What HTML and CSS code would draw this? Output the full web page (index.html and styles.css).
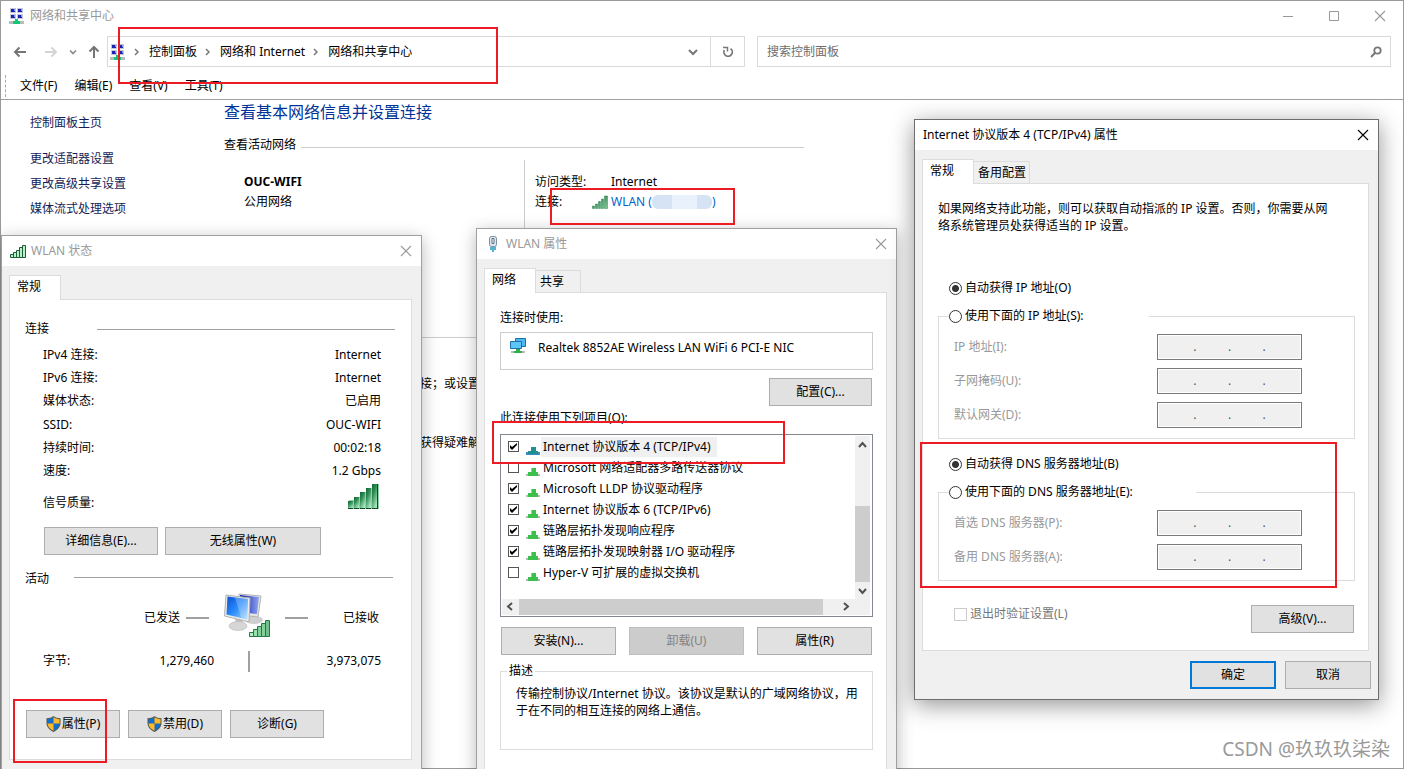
FILE: index.html
```html
<!DOCTYPE html>
<html lang="zh-CN">
<head>
<meta charset="utf-8">
<title>网络和共享中心</title>
<link rel="stylesheet" href="styles.css">
</head>
<body>
<svg class="defs" width="0" height="0" aria-hidden="true">
  <defs>
    <linearGradient id="gBar" x1="0" y1="0" x2="1" y2="1"><stop offset="0" stop-color="#14652f"/><stop offset="1" stop-color="#7fcb9a"/></linearGradient>
    <linearGradient id="gBarV" x1="0" y1="0" x2=".6" y2="1"><stop offset="0" stop-color="#0f6a36"/><stop offset=".4" stop-color="#2c8a52"/><stop offset="1" stop-color="#a6e6bd"/></linearGradient>
    <linearGradient id="gScreen" x1="0" y1="0" x2="1" y2="1"><stop offset="0" stop-color="#0a4fd0"/><stop offset=".5" stop-color="#2b8cff"/><stop offset="1" stop-color="#a9dcff"/></linearGradient>
    <linearGradient id="gScreen2" x1="0" y1="0" x2="1" y2="0"><stop offset="0" stop-color="#0a1aa8"/><stop offset="1" stop-color="#8fa4f2"/></linearGradient>
    <symbol id="netcenter" viewBox="0 0 16 16">
      <path fill="#c4c8d4" d="M1 0h6v5H1zM8 0h6v5H8zM1 6h6v5H1zM8 6h6v5H8z"/>
      <path fill="#1b22b4" d="M2 1h4v3H2zM9 1h4v3H9zM2 7h4v3H2zM9 7h4v3H9z"/>
      <path fill="#7e9bf0" d="M5 1h1v2H5zM12 1h1v2h-1zM5 7h1v2H5zM12 7h1v2h-1z"/>
      <path fill="#b9bdb9" d="M0 13h15v3H0z"/>
      <path fill="#12c878" d="M6 11h3v2h2v3H4v-3h2z"/>
    </symbol>
    <symbol id="close" viewBox="0 0 12 12"><path d="M1 1l10 10M11 1L1 11" fill="none" stroke="currentColor" stroke-width="1.1"/></symbol>
    <symbol id="plug" viewBox="0 0 14 8">
      <path fill="#b7b7b7" d="M0 6h14v2H0z"/><path fill="#3cc04c" d="M5 0h5v4h2v4H2V4h3z"/><path fill="#7fe08a" d="M5 0h1v4H5z"/>
    </symbol>
    <symbol id="plugblue" viewBox="0 0 14 8">
      <path fill="#3b8fc4" d="M0 5h14v3H0z"/><path fill="#1f8f8f" d="M5 0h5v4h2v3H2V4h3z"/>
    </symbol>
    <symbol id="bars" viewBox="0 0 16 13">
      <path fill="#b8f2c8" stroke="#1c5c36" d="M.5 9.500h3v3h-3zM3.500 7.500h3v5h-3zM6.500 5.500h3v7h-3zM9.500 2.500h3v10h-3zM12.500 .5h3v12h-3z"/>
    </symbol>
    <symbol id="barsdark" viewBox="0 0 16 14">
      <path fill="url(#gBar)" stroke="#2f8552" stroke-width=".5" d="M.5 11h2v2.500h-2zM3.500 9h2v4.500h-2zM6.500 6.500h2v7h-2zM9.500 4h2v9.500h-2zM12.500 1h3v12.500h-3z"/>
    </symbol>
    <symbol id="shield" viewBox="0 0 16 17">
      <path fill="#5a5a52" d="M8 0c2 1.600 4.500 2.300 7.500 2.300V7c0 5-3 8-7.500 10C3.500 15 .5 12 .5 7V2.300C3.500 2.300 6 1.600 8 0z"/>
      <path fill="#0f6fd0" d="M8 1.300V8H1.600V3.300C4 3.200 6.200 2.500 8 1.300zM8 8h6.300c-.4 4-2.800 6.200-6.300 7.800z"/>
      <path fill="#fdb92c" d="M8 1.300c1.800 1.200 4 1.900 6.400 2V8H8zM8 8v7.800C4.500 14.200 2.100 12 1.600 8z"/>
    </symbol>
  </defs>
</svg>

<main class="desktop">
  <section class="explorer">
    <header class="explorer-title">
      <svg class="i16"><use href="#netcenter"/></svg>
      <h1>网络和共享中心</h1>
      <div class="caption-buttons">
        <button type="button" aria-label="最小化"><svg width="12" height="12"><path d="M1 6.500h10" stroke="#999"/></svg></button>
        <button type="button" aria-label="最大化"><svg width="12" height="12"><path d="M1.500 1.500h9v9h-9z" fill="none" stroke="#999"/></svg></button>
        <button type="button" aria-label="关闭"><svg width="12" height="12"><use href="#close"/></svg></button>
      </div>
    </header>
    <nav class="toolbar">
      <div class="history">
        <button type="button" aria-label="后退"><svg width="14" height="12"><path d="M13 6H2M6.500 1.500L2 6l4.500 4.500" fill="none" stroke="#757575" stroke-width="2"/></svg></button>
        <button type="button" class="forward" aria-label="前进"><svg width="14" height="12"><path d="M1 6h11M7.500 1.500L12 6l-4.500 4.500" fill="none" stroke="#d4d4d4" stroke-width="2"/></svg></button>
        <button type="button" class="narrow" aria-label="最近"><svg width="8" height="6"><path d="M1 1.500l3 3 3-3" fill="none" stroke="#8a8a8a" stroke-width="1.700"/></svg></button>
        <button type="button" class="up" aria-label="向上"><svg width="12" height="14"><path d="M6 13V2M1.500 6.500L6 2l4.500 4.500" fill="none" stroke="#757575" stroke-width="2"/></svg></button>
      </div>
      <div class="address">
        <svg class="i16"><use href="#netcenter"/></svg>
        <ol class="crumbs">
          <li><svg width="5" height="8"><path d="M1 1l3 3-3 3" fill="none" stroke="#777" stroke-width="1.500"/></svg><a href="#">控制面板</a></li>
          <li><svg width="5" height="8"><path d="M1 1l3 3-3 3" fill="none" stroke="#777" stroke-width="1.500"/></svg><a href="#">网络和 Internet</a></li>
          <li><svg width="5" height="8"><path d="M1 1l3 3-3 3" fill="none" stroke="#777" stroke-width="1.500"/></svg><a href="#">网络和共享中心</a></li>
        </ol>
        <button type="button" class="drop" aria-label="展开"><svg width="10" height="8"><path d="M1 2l4 4 4-4" fill="none" stroke="#777" stroke-width="2"/></svg></button>
        <button type="button" class="refresh" aria-label="刷新"><svg width="12" height="12"><path d="M8.500 2.600A4.200 4.200 0 1 1 2.300 4.200" fill="none" stroke="#777" stroke-width="1.700"/><path d="M1 1.500h4.500v4" fill="none" stroke="#777" stroke-width="1.500"/></svg></button>
      </div>
      <form class="search">
        <input type="text" placeholder="搜索控制面板" aria-label="搜索控制面板">
        <button type="button" aria-label="搜索"><svg width="12" height="12"><circle cx="7.500" cy="4.500" r="3.200" fill="none" stroke="#777" stroke-width="1.800"/><path d="M5.200 6.800L1 11" stroke="#777" stroke-width="2"/></svg></button>
      </form>
    </nav>
    <div class="menubar">
      <button type="button">文件(F)</button><button type="button">编辑(E)</button><button type="button">查看(V)</button><button type="button">工具(T)</button>
    </div>
    <div class="content">
      <aside class="sidebar">
        <a href="#" class="home">控制面板主页</a>
        <a href="#">更改适配器设置</a>
        <a href="#">更改高级共享设置</a>
        <a href="#">媒体流式处理选项</a>
      </aside>
      <div class="overview">
        <h2>查看基本网络信息并设置连接</h2>
        <h3 class="ruled">查看活动网络</h3>
        <div class="network">
          <div class="network-name"><strong>OUC-WIFI</strong><span>公用网络</span></div>
          <dl class="network-info">
            <dt>访问类型:</dt><dd>Internet</dd>
            <dt>连接:</dt><dd class="with-icon"><svg width="16" height="14"><use href="#barsdark"/></svg><a href="#">WLAN (<span class="mask"></span>)</a></dd>
          </dl>
        </div>
        <h3 class="ruled change">更改网络设置</h3>
        <p class="task">连接；或设置</p>
        <p class="task second">者获得疑难解</p>
      </div>
    </div>
  </section>

  <section class="dialog status">
    <header class="dialog-title"><svg width="16" height="13"><use href="#bars"/></svg><h2>WLAN 状态</h2><button type="button" aria-label="关闭"><svg width="12" height="12"><use href="#close"/></svg></button></header>
    <div class="dialog-body">
      <div class="tabs"><button type="button" class="tab active">常规</button></div>
      <div class="panel">
        <div class="section-head"><h3>连接</h3><hr></div>
        <dl class="facts">
          <dt>IPv4 连接:</dt><dd>Internet</dd>
          <dt>IPv6 连接:</dt><dd>Internet</dd>
          <dt>媒体状态:</dt><dd>已启用</dd>
          <dt>SSID:</dt><dd>OUC-WIFI</dd>
          <dt>持续时间:</dt><dd>00:02:18</dd>
          <dt>速度:</dt><dd>1.2 Gbps</dd>
        </dl>
        <div class="quality"><span>信号质量:</span>
          <svg width="31" height="27"><path fill="#8fd0a6" d="M1 17h5v9H1zM7 14h5v12H7zM13 9h5v17h-5zM19 5h5v21h-5zM25 1h6v25h-6z"/><path fill="url(#gBarV)" d="M0 18h5v8H0z"/><path fill="url(#gBarV)" d="M6 14h5v12H6z"/><path fill="url(#gBarV)" d="M12 9h5v17h-5z"/><path fill="url(#gBarV)" d="M18 5h5v21h-5z"/><path fill="url(#gBarV)" d="M24 1h5v25h-5z"/><path stroke="#0c4a24" d="M0 25.500h5M6 25.500h5M12 25.500h5M18 25.500h5M24 25.500h6M29.500 1v25"/></svg>
        </div>
        <div class="row detail-buttons"><button type="button" class="btn w114">详细信息(E)...</button><button type="button" class="btn w156">无线属性(W)</button></div>
        <div class="section-head activity"><h3>活动</h3><hr></div>
        <div class="traffic">
          <span>已发送</span><i class="dash"></i>
          <svg width="46" height="44" viewBox="0 0 46 44">
            <ellipse cx="30" cy="27" rx="9" ry="4" fill="#cfcfcf"/>
            <path fill="#e4e4e2" stroke="#b4b4b4" d="M15 1l22 2-3 21-19-2z"/><path fill="url(#gScreen2)" d="M16 2l19 2-2 17-17-2z"/>
            <path fill="#c2c2c2" d="M11 25l8 2-1 6h-6z"/><ellipse cx="14" cy="33" rx="9" ry="4.500" fill="#d6d6d6" stroke="#b8b8b8" stroke-width=".6"/>
            <path fill="#ecece8" stroke="#b0b0b0" d="M2 2l24 3-1 24L.5 23z"/><path fill="url(#gScreen)" d="M3.500 3.500L24 6l-.8 20.500L2.500 21.500z"/><path fill="#fff" opacity=".25" d="M11 4.500L24 6l-.8 20.500-6-1.500z"/>
            <path fill="#b9ecc9" stroke="#217a42" d="M25.500 39.500h4v4h-4z"/><path fill="#9adfb0" stroke="#217a42" d="M29.500 36.500h4v7h-4z"/><path fill="#82cf9c" stroke="#217a42" d="M33.500 33.500h4v10h-4z"/><path fill="#82cf9c" stroke="#217a42" d="M37.500 30.500h4v13h-4z"/><path fill="#6fc08c" stroke="#217a42" d="M41.500 27.500h4v16h-4z"/>
          </svg>
          <i class="dash"></i><span class="received">已接收</span>
        </div>
        <div class="bytes"><span>字节:</span><span class="num">1,279,460</span><i class="split"></i><span class="num">3,973,075</span></div>
        <div class="row action-buttons">
          <button type="button" class="btn w94"><svg width="15" height="16"><use href="#shield"/></svg>属性(P)</button>
          <button type="button" class="btn w94"><svg width="15" height="16"><use href="#shield"/></svg>禁用(D)</button>
          <button type="button" class="btn w94">诊断(G)</button>
        </div>
      </div>
    </div>
  </section>

  <section class="dialog props">
    <header class="dialog-title"><svg width="16" height="16"><rect x="4.500" y=".5" width="7" height="10" rx="2" fill="#dbe8f2" stroke="#7b8d9e"/><path d="M7 2.500h2v5H7z" fill="#fff" stroke="#5d6f80"/><path d="M6 11v3M8 11v5M10 11v3" stroke="#2aa0c8" stroke-width="1.600"/></svg><h2>WLAN 属性</h2><button type="button" aria-label="关闭"><svg width="12" height="12"><use href="#close"/></svg></button></header>
    <div class="dialog-body">
      <div class="tabs"><button type="button" class="tab active">网络</button><button type="button" class="tab">共享</button></div>
      <div class="panel">
        <p class="caption">连接时使用:</p>
        <div class="adapter"><svg width="17" height="17"><path fill="#4db8ee" stroke="#1d6fa8" d="M5.500 1.500h10v8h-10z"/><path fill="#5cc6fa" stroke="#1d6fa8" d="M.5 4.500h11v7H.500z"/><path fill="#b9b9b9" d="M1 14h14v2H1z"/><path fill="#2fae4a" d="M6 12h4v2h2v2H4v-2h2z"/></svg>Realtek 8852AE Wireless LAN WiFi 6 PCI-E NIC</div>
        <div class="row end"><button type="button" class="btn w103">配置(C)...</button></div>
        <p class="caption items-caption">此连接使用下列项目(O):</p>
        <div class="listbox">
          <ul>
            <li><input type="checkbox" id="c1" checked><svg width="14" height="8"><use href="#plugblue"/></svg><label for="c1" class="selected">Internet 协议版本 4 (TCP/IPv4)</label></li>
            <li><input type="checkbox" id="c2"><svg width="14" height="8"><use href="#plug"/></svg><label for="c2">Microsoft 网络适配器多路传送器协议</label></li>
            <li><input type="checkbox" id="c3" checked><svg width="14" height="8"><use href="#plug"/></svg><label for="c3">Microsoft LLDP 协议驱动程序</label></li>
            <li><input type="checkbox" id="c4" checked><svg width="14" height="8"><use href="#plug"/></svg><label for="c4">Internet 协议版本 6 (TCP/IPv6)</label></li>
            <li><input type="checkbox" id="c5" checked><svg width="14" height="8"><use href="#plug"/></svg><label for="c5">链路层拓扑发现响应程序</label></li>
            <li><input type="checkbox" id="c6" checked><svg width="14" height="8"><use href="#plug"/></svg><label for="c6">链路层拓扑发现映射器 I/O 驱动程序</label></li>
            <li><input type="checkbox" id="c7"><svg width="14" height="8"><use href="#plug"/></svg><label for="c7">Hyper-V 可扩展的虚拟交换机</label></li>
          </ul>
          <div class="vbar"><svg width="15" height="17"><path d="M4 11l3.500-4 3.500 4" fill="none" stroke="#505050" stroke-width="2"/></svg><i></i><svg width="15" height="17"><path d="M4 7l3.500 4L11 7" fill="none" stroke="#505050" stroke-width="2"/></svg></div>
          <div class="hbar"><svg width="17" height="15"><path d="M10 4L6 7.500l4 3.500" fill="none" stroke="#505050" stroke-width="2"/></svg><i></i><svg width="17" height="15"><path d="M7 4l4 3.500L7 11" fill="none" stroke="#505050" stroke-width="2"/></svg></div>
        </div>
        <div class="row list-buttons"><button type="button" class="btn w115">安装(N)...</button><button type="button" class="btn w115" disabled>卸载(U)</button><button type="button" class="btn w115">属性(R)</button></div>
        <fieldset class="description"><legend>描述</legend><p>传输控制协议/Internet 协议。该协议是默认的广域网络协议，用于在不同的相互连接的网络上通信。</p></fieldset>
      </div>
    </div>
  </section>

  <section class="dialog tcp">
    <header class="dialog-title"><h2>Internet 协议版本 4 (TCP/IPv4) 属性</h2><button type="button" aria-label="关闭"><svg width="12" height="12"><use href="#close"/></svg></button></header>
    <div class="dialog-body">
      <div class="tabs"><button type="button" class="tab active">常规</button><button type="button" class="tab wide">备用配置</button></div>
      <div class="panel">
        <p class="intro">如果网络支持此功能，则可以获取自动指派的 IP 设置。否则，你需要从网络系统管理员处获得适当的 IP 设置。</p>
        <label class="radio ip-auto"><input type="radio" name="ip" checked>自动获得 IP 地址(O)</label>
        <fieldset>
          <legend><label class="radio"><input type="radio" name="ip">使用下面的 IP 地址(S):</label></legend>
          <div class="field"><label for="ip1">IP 地址(I):</label><div class="octets"><input type="text" id="ip1" disabled>.<input type="text" aria-label="2" disabled>.<input type="text" aria-label="3" disabled>.<input type="text" aria-label="4" disabled></div></div>
          <div class="field"><label for="ip2">子网掩码(U):</label><div class="octets"><input type="text" id="ip2" disabled>.<input type="text" aria-label="2" disabled>.<input type="text" aria-label="3" disabled>.<input type="text" aria-label="4" disabled></div></div>
          <div class="field"><label for="ip3">默认网关(D):</label><div class="octets"><input type="text" id="ip3" disabled>.<input type="text" aria-label="2" disabled>.<input type="text" aria-label="3" disabled>.<input type="text" aria-label="4" disabled></div></div>
        </fieldset>
        <label class="radio dns-auto"><input type="radio" name="dns" checked>自动获得 DNS 服务器地址(B)</label>
        <fieldset class="dns">
          <legend><label class="radio"><input type="radio" name="dns">使用下面的 DNS 服务器地址(E):</label></legend>
          <div class="field"><label for="ip4">首选 DNS 服务器(P):</label><div class="octets"><input type="text" id="ip4" disabled>.<input type="text" aria-label="2" disabled>.<input type="text" aria-label="3" disabled>.<input type="text" aria-label="4" disabled></div></div>
          <div class="field"><label for="ip5">备用 DNS 服务器(A):</label><div class="octets"><input type="text" id="ip5" disabled>.<input type="text" aria-label="2" disabled>.<input type="text" aria-label="3" disabled>.<input type="text" aria-label="4" disabled></div></div>
        </fieldset>
        <div class="advanced"><label class="verify"><input type="checkbox" disabled>退出时验证设置(L)</label><button type="button" class="btn w103">高级(V)...</button></div>
      </div>
    </div>
    <footer><button type="button" class="btn w86 primary">确定</button><button type="button" class="btn w86">取消</button></footer>
  </section>

  <div class="mark mark-path"></div>
  <div class="mark mark-wlan"></div>
  <div class="mark mark-props"></div>
  <div class="mark mark-ipv4"></div>
  <div class="mark mark-dns"></div>
  <p class="watermark">CSDN @玖玖玖柒染</p>
</main>
</body>
</html>
```

FILE: styles.css
```css
* { box-sizing: border-box; margin: 0; padding: 0; }
body { font: 12px/20px "Noto Sans", "Noto Sans CJK SC", sans-serif; color: #000; background: #fff; }
button, input { font: inherit; color: inherit; }
button { background: none; border: 0; display: flex; align-items: center; justify-content: center; white-space: nowrap; }
h1, h2, h3 { font-size: 12px; font-weight: 400; }
a { color: inherit; text-decoration: none; }
ul, ol { list-style: none; }
svg { display: block; flex: none; }
fieldset { border: 1px solid #dcdcdc; min-width: 0; }
.defs { position: absolute; }
.i16 { width: 16px; height: 16px; }
.desktop { position: relative; height: 100vh; overflow: hidden; }

/* Explorer window */
.explorer { height: 100%; border: 1px solid #999; display: flex; flex-direction: column; }
.explorer-title { display: flex; align-items: center; height: 30px; padding-left: 8px; gap: 5px; color: #999; }
.caption-buttons { display: flex; margin-left: auto; }
.caption-buttons button { width: 46px; height: 30px; }
.toolbar { display: flex; height: 41px; padding: 5px 12px 5px 0; }
.history { display: flex; align-items: center; width: 106px; padding-left: 12px; gap: 11px; }
.history button { width: 14px; }
.history .forward { margin-left: 6px; }
.history .narrow { width: 8px; }
.history .up { width: 12px; }
.address { flex: 637; display: flex; align-items: center; border: 1px solid #d9d9d9; padding-left: 2px; }
.crumbs { display: flex; line-height: 18px; }
.crumbs li { display: flex; align-items: center; }
.crumbs svg { margin: 0 10px 0 8px; }
.drop { width: 34px; margin-left: auto; }
.refresh { width: 34px; align-self: stretch; border-left: 1px solid #d9d9d9; }
.search { flex: 635; display: flex; margin-left: 12px; border: 1px solid #d9d9d9; }
.search input { flex: 1; min-width: 0; border: 0; outline: 0; padding-left: 9px; }
.search input::placeholder { color: #6d6d6d; }
.search button { width: 28px; }
.menubar { display: flex; align-items: center; height: 28px; gap: 17px; padding-left: 4px; border-bottom: 1px solid #a0a0a0; }
.menubar::before { content: ""; height: 22px; border-left: 1px dashed #aaa; margin-right: -3px; }
.content { flex: 1; display: flex; min-height: 0; }
.sidebar { width: 223px; padding: 10px 0 0 29px; display: flex; flex-direction: column; line-height: 25px; color: #151c55; }
.sidebar .home { margin-bottom: 11px; }
.overview { flex: 1; max-width: 580px; }
.overview h2 { font-size: 16px; line-height: 24px; color: #003399; }
.ruled { display: flex; align-items: center; gap: 5px; margin-top: 11px; }
.ruled::after { content: ""; flex: 1; border-top: 1px solid #ccc; margin-top: 5px; }
.network { display: flex; height: 76px; margin-top: 5px; }
.network-name { display: flex; flex-direction: column; width: 300px; padding: 12px 0 0 20px; }
.network-info { flex: 1; display: grid; grid-template-columns: 57px 1fr; grid-auto-rows: 20px; border-left: 1px solid #ccc; padding: 12px 0 0 10px; }
.network-info dd { padding-left: 19px; }
.network-info .with-icon { display: flex; align-items: center; gap: 3px; padding-left: 0; }
.network-info a { display: flex; align-items: center; color: #0066cc; }
.mask { width: 60px; height: 14px; border-radius: 6px; background: linear-gradient(90deg, #d6e3f5 33%, #e9f2fc 33% 75%, #d6e3f5 75%); }
.change { margin-top: 89px; }
.task { margin-top: 29px; padding-left: 184px; }
.task.second { margin-top: 39px; }

/* Dialog windows */
.dialog { position: absolute; background: #f0f0f0; border: 1px solid #a0a0a0; box-shadow: 0 4px 16px rgba(0, 0, 0, .28); }
.status { left: 1px; top: 235px; width: 421px; }
.props { left: 476px; top: 228px; width: 421px; }
.tcp { left: 914px; top: 119px; width: 465px; border-color: #6e6e6e; box-shadow: 0 5px 22px rgba(0, 0, 0, .42); }
.dialog-title { display: flex; align-items: center; height: 30px; padding-left: 8px; gap: 5px; background: #fff; color: #999; }
.tcp .dialog-title { color: #000; }
.dialog-title button { width: 30px; height: 30px; margin-left: auto; }
.dialog-body { padding: 9px 9px 0 7px; }
.status .dialog-body, .props .dialog-body { padding-bottom: 20px; }
.tabs { display: flex; align-items: flex-end; }
.tab { height: 23px; width: 45px; margin-bottom: -1px; padding: 0 0 0 4px; justify-content: flex-start; border: 1px solid #dcdcdc; border-left: 0; background: #f0f0f0; }
.tab.active { position: relative; width: 52px; height: 25px; padding: 0 0 3px 7px; border-left: 1px solid #dcdcdc; border-bottom: 0; background: #fff; }
.tab.wide { width: 56px; }
.panel { background: #fff; border: 1px solid #dcdcdc; }
.row { display: flex; gap: 7px; }
.row.end { justify-content: flex-end; }
.btn { height: 28px; background: #e1e1e1; border: 1px solid #adadad; gap: 1px; }
.btn:disabled { background: #ccc; border-color: #bfbfbf; color: #838383; }
.btn.primary { border: 2px solid #0078d7; }
.w86 { width: 86px; }
.w94 { width: 94px; }
.w103 { width: 103px; }
.w114 { width: 114px; }
.w115 { width: 115px; }
.w156 { width: 156px; }

/* WLAN status */
.status .panel { padding: 19px 16px 21px 15px; }
.section-head { display: flex; align-items: center; }
.section-head h3 { width: 72px; }
.section-head hr { flex: 1; border: 0; border-top: 1px solid #a0a0a0; }
.section-head.activity { margin: 14px 2px 0 0; }
.activity h3 { width: 49px; }
.section-head.activity hr { margin-bottom: 4px; }
.facts { display: grid; grid-template-columns: auto 1fr; grid-template-rows: repeat(6, 1fr); align-items: center; height: 140px; margin-top: 4px; padding: 0 14px 0 18px; }
.facts dd { text-align: right; }
.quality { display: flex; justify-content: space-between; height: 38px; padding: 0 16px 0 18px; line-height: 40px; }
.detail-buttons { margin: 6px 0 0 19px; }
.traffic { display: flex; align-items: center; gap: 15px; margin-top: 4px; padding: 0 16px 0 119px; }
.traffic span, .dash { margin-top: 5px; }
.traffic span:first-child { margin-right: -9px; }
.dash { width: 23px; height: 2px; background: #a0a0a0; }
.received { margin-left: auto; }
.bytes { display: grid; grid-template-columns: 60px 111px 70px 1fr; margin-top: 14px; padding: 0 14px 0 18px; }
.num { text-align: right; }
.split { justify-self: center; width: 2px; height: 21px; background: #a0a0a0; }
.action-buttons { margin: 38px 0 0 1px; gap: 8px; }

/* WLAN properties */
.props .panel { padding: 15px 13px 40px 15px; }
.adapter { display: flex; height: 38px; margin: 4px 0 8px; padding: 4px 0 0 9px; gap: 11px; line-height: 22px; border: 1px solid #ccc; white-space: nowrap; }
.row.end, .list-buttons { padding-right: 1px; }
.items-caption { margin-top: 2px; }
.listbox { display: grid; grid-template: 163px 16px / 1fr 15px; margin-top: 6px; padding: 1px 2px 1px 1px; border: 1px solid #828790; }
.listbox ul { padding-left: 6px; }
.listbox li { display: flex; align-items: center; height: 21px; }
.listbox li svg { margin: 9px 1px 0 7px; }
.listbox label { padding: 0 6px 0 2px; white-space: nowrap; }
.selected { background: #f0f0f0; }
input[type="checkbox"] { appearance: none; flex: none; width: 11px; height: 11px; border: 1px solid #555; background: #fff; }
input[type="checkbox"]:checked::before { content: ""; display: block; width: 9px; height: 9px; background: #000; clip-path: polygon(1px 3px, 3px 5px, 8px 1px, 8px 3px, 3px 8px, 1px 6px); }
.vbar { display: flex; flex-direction: column; background: #f0f0f0; }
.vbar i { flex: 1; margin-top: 53px; background: #cdcdcd; }
.hbar { grid-column: 1 / 3; display: flex; background: #f0f0f0; }
.hbar i { flex: 1; margin-right: 14px; background: #cdcdcd; }
.hbar svg:last-child { margin-right: 16px; }
.list-buttons { margin-top: 10px; padding-left: 1px; justify-content: space-between; }
.description { margin-top: 8px; padding: 6px 12px 30px 15px; line-height: 17px; }
.description legend { margin-left: -9px; padding: 0 2px; line-height: 16px; }

/* TCP/IPv4 properties */
.tcp .panel { padding: 16px 13px 17px 15px; }
.intro { line-height: 17px; padding-right: 22px; }
.radio { display: flex; align-items: center; gap: 3px; line-height: 16px; }
.radio input { appearance: none; width: 13px; height: 13px; border: 1px solid #333; border-radius: 50%; background: #fff; }
.radio input:checked { background: radial-gradient(circle, #333 3px, #fff 4px); }
.ip-auto { margin: 46px 0 0 11px; }
.dns-auto { margin: 17px 0 0 11px; }
.tcp fieldset { margin-top: 12px; padding: 10px 52px 10px 15px; }
.tcp legend { width: 200px; margin-left: -5px; }
.tcp .dns legend { width: 247px; }
.field { display: flex; align-items: center; justify-content: space-between; color: #999; }
.field + .field { margin-top: 8px; }
.octets { display: flex; align-items: center; width: 145px; height: 26px; padding: 0 4px; border: 1px solid #7a7a7a; background: #f0f0f0; box-shadow: inset 0 0 0 1px #fff; color: #555; }
.octets input { flex: 1; min-width: 0; width: 0; border: 0; background: none; }
.advanced { display: flex; align-items: flex-start; justify-content: space-between; margin-top: 24px; padding: 0 1px 0 16px; }
.verify { display: flex; align-items: center; gap: 3px; line-height: 18px; color: #777; }
.verify input[type="checkbox"] { width: 13px; height: 13px; border-color: #ccc; }
.tcp footer { display: flex; justify-content: flex-end; gap: 9px; padding: 10px 7px; }

/* Annotations */
.mark { position: absolute; border: 2px solid #ed1c24; pointer-events: none; }
.mark-path { left: 118px; top: 27px; width: 380px; height: 57px; }
.mark-wlan { left: 550px; top: 188px; width: 185px; height: 37px; }
.mark-props { left: 13px; top: 699px; width: 94px; height: 64px; }
.mark-ipv4 { left: 492px; top: 421px; width: 293px; height: 43px; }
.mark-dns { left: 920px; top: 442px; width: 417px; height: 146px; }
.watermark { position: absolute; right: 14px; bottom: 6px; font-size: 19px; line-height: 28px; color: #999; text-shadow: 1px 1px 0 #fff; }
```
